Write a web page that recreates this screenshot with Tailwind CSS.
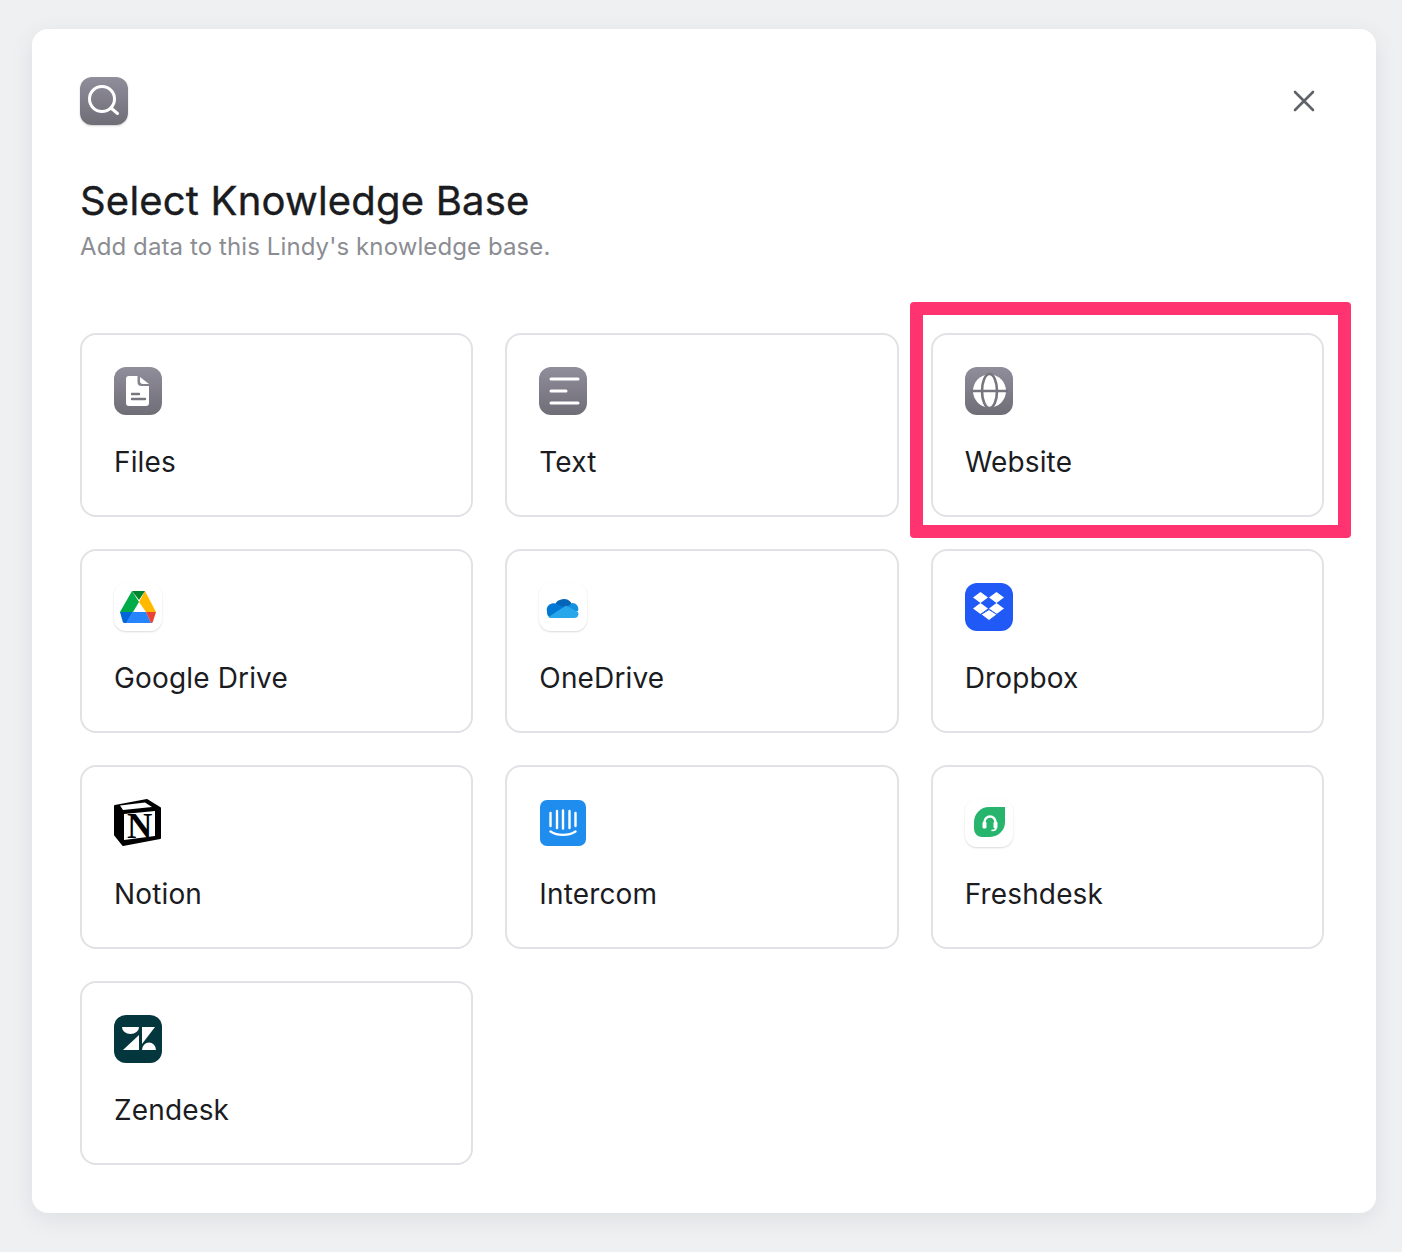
<!DOCTYPE html>
<html lang="en">

<head>
    <meta charset="UTF-8">
    <meta name="viewport" content="width=device-width, initial-scale=1.0">
    <title>Select Knowledge Base</title>
    <script src="https://cdn.jsdelivr.net/npm/@tailwindcss/browser@4"></script>
</head>

<body class="bg-[#eff0f2] h-[1252px] overflow-hidden font-['Inter',sans-serif]">
    <div class="pt-[29px] px-[32px]">
        <div class="relative bg-white rounded-[16px] w-[1344px] h-[1184px] p-[48px] shadow-[0_6px_24px_rgba(16,24,40,0.08)]">
            <div class="flex items-center justify-between h-[48px]">
                <div class="w-[48px] h-[48px] rounded-[12px] bg-gradient-to-b from-[#918e9c] to-[#6f6d76] shadow-[0_1px_2px_rgba(0,0,0,0.2)] flex items-center justify-center">
                    <svg class="w-[36px] h-[36px]" viewBox="0 0 36 36" fill="none" stroke="white" stroke-width="3" stroke-linecap="round">
                        <circle cx="16" cy="16" r="12.500"/>
                        <path d="M25 25L31.500 30.500"/>
                    </svg>
                </div>
                <button class="w-[48px] h-[48px] flex items-center justify-center">
                    <svg class="w-[24px] h-[24px]" viewBox="0 0 24 24" fill="none" stroke="#5f6368" stroke-width="2.600" stroke-linecap="round">
                        <path d="M3 3L21 21M21 3L3 21"/>
                    </svg>
                </button>
            </div>

            <h1 class="mt-[52px] text-[40px] leading-[48px] font-normal tracking-[0.2px] text-[#1b1c1f] [-webkit-text-stroke:0.4px_#1b1c1f]">Select Knowledge Base</h1>
            <p class="mt-[6px] text-[24px] leading-[32px] tracking-[0.1px] text-[#8b8d93]">Add data to this Lindy's knowledge base.</p>

            <div class="mt-[70px] w-[1244px] grid grid-cols-3 gap-[32px]">
                <div class="h-[184px] rounded-[16px] border-2 border-[#e1e2e5] p-[32px]">
                    <div class="w-[48px] h-[48px] rounded-[12px] bg-gradient-to-b from-[#918e9c] to-[#6f6d76] flex items-center justify-center">
                        <svg class="w-[48px] h-[48px]" viewBox="0 0 48 48">
                            <path fill="white" d="M15 9h8.500v6a4 4 0 0 0 4 4H35v17a3 3 0 0 1-3 3H15a3 3 0 0 1-3-3V12a3 3 0 0 1 3-3z"/>
                            <path fill="white" d="M26 10l9 7h-6a3 3 0 0 1-3-3z"/>
                            <path fill="none" stroke="#77757e" stroke-width="2.400" stroke-linecap="round" d="M18 27h7M18 32h13"/>
                        </svg>
                    </div>
                    <p class="mt-[29px] text-[28px] leading-[36px] tracking-[0.15px] text-[#1b1c1f]">Files</p>
                </div>

                <div class="h-[184px] rounded-[16px] border-2 border-[#e1e2e5] p-[32px]">
                    <div class="w-[48px] h-[48px] rounded-[12px] bg-gradient-to-b from-[#918e9c] to-[#6f6d76] flex items-center justify-center">
                        <svg class="w-[48px] h-[48px]" viewBox="0 0 48 48" fill="none" stroke="white" stroke-width="3" stroke-linecap="round">
                            <path d="M12 12h27M12 24h15M12 36h27"/>
                        </svg>
                    </div>
                    <p class="mt-[29px] text-[28px] leading-[36px] tracking-[0.15px] text-[#1b1c1f]">Text</p>
                </div>

                <div class="h-[184px] rounded-[16px] border-2 border-[#e1e2e5] p-[32px]">
                    <div class="w-[48px] h-[48px] rounded-[12px] bg-gradient-to-b from-[#918e9c] to-[#6f6d76] flex items-center justify-center">
                        <svg class="w-[48px] h-[48px]" viewBox="0 0 48 48">
                            <circle cx="24.500" cy="24" r="16.500" fill="white"/>
                            <ellipse cx="24.500" cy="24" rx="7.500" ry="17" fill="none" stroke="#77757e" stroke-width="2.600"/>
                            <path d="M6 24h37" stroke="#77757e" stroke-width="2.600"/>
                        </svg>
                    </div>
                    <p class="mt-[29px] text-[28px] leading-[36px] tracking-[0.15px] text-[#1b1c1f]">Website</p>
                </div>

                <div class="h-[184px] rounded-[16px] border-2 border-[#e1e2e5] p-[32px]">
                    <div class="w-[48px] h-[48px] rounded-[12px] bg-white shadow-[0_1px_2px_rgba(0,0,0,0.15)] flex items-center justify-center">
                        <svg class="w-[48px] h-[48px]" viewBox="0 0 48 48">
                            <polygon fill="#00ac47" points="18,8 25,19 19,29 6,29"/>
                            <polygon fill="#ffba00" points="31,8 42,29 32,29 25,19"/>
                            <polygon fill="#00832d" points="18,8 31,8 25,17"/>
                            <path fill="#0066da" d="M6 29h13l-6.500 11H10.500a2 2 0 0 1-1.700-1z"/>
                            <polygon fill="#2684fc" points="19,29 32,29 37,40 12,40"/>
                            <path fill="#ea4335" d="M32 29h10l-3 9.500a2 2 0 0 1-1.500 1.500H37z"/>
                        </svg>
                    </div>
                    <p class="mt-[29px] text-[28px] leading-[36px] tracking-[0.15px] text-[#1b1c1f]">Google Drive</p>
                </div>

                <div class="h-[184px] rounded-[16px] border-2 border-[#e1e2e5] p-[32px]">
                    <div class="w-[48px] h-[48px] rounded-[12px] bg-white shadow-[0_1px_2px_rgba(0,0,0,0.15)] flex items-center justify-center">
                        <svg class="w-[48px] h-[48px]" viewBox="0 0 48 48">
                            <path fill="#0364b8" d="M16 22a9 8 0 0 1 16-2.500l1 2.500-6 3-9-1z"/>
                            <path fill="#0078d4" d="M13 20.500c2-.5 4 0 6 1l8 3.500-12 10h-2.500A5.500 5.500 0 0 1 8 29a6.500 6.500 0 0 1 5-8.500z"/>
                            <path fill="#1490df" d="M33 20a6 6 0 0 1 6 8l-7 1-5-4z"/>
                            <path fill="#28a8ea" d="M27 22.500l12 6.500a4 4 0 0 1-4 6H12.500a5 5 0 0 1-3-1z"/>
                        </svg>
                    </div>
                    <p class="mt-[29px] text-[28px] leading-[36px] tracking-[0.15px] text-[#1b1c1f]">OneDrive</p>
                </div>

                <div class="h-[184px] rounded-[16px] border-2 border-[#e1e2e5] p-[32px]">
                    <div class="w-[48px] h-[48px] rounded-[12px] bg-[#2059f6] flex items-center justify-center">
                        <svg class="w-[48px] h-[48px]" viewBox="0 0 48 48" fill="white">
                            <polygon points="15.500,9 23,14.500 15.500,20 8,14.500"/>
                            <polygon points="31.500,9 39,14.500 31.500,20 24,14.500"/>
                            <polygon points="15.500,20 23,25.500 15.500,31 8,25.500"/>
                            <polygon points="31.500,20 39,25.500 31.500,31 24,25.500"/>
                            <polygon stroke="#2059f6" stroke-width="1" points="24,26.500 32,31.500 24,37.500 16,31.500"/>
                        </svg>
                    </div>
                    <p class="mt-[29px] text-[28px] leading-[36px] tracking-[0.15px] text-[#1b1c1f]">Dropbox</p>
                </div>

                <div class="h-[184px] rounded-[16px] border-2 border-[#e1e2e5] p-[32px]">
                    <div class="relative w-[48px] h-[48px] flex items-center justify-center">
                        <svg class="w-[48px] h-[48px]" viewBox="0 0 48 48">
                            <polygon fill="black" stroke="black" stroke-width="2" stroke-linejoin="round" points="1,7 33,1 46,9 46,39 9,46 1,36"/>
                            <polygon fill="white" points="10,15 41,12 41,37 10,41"/>
                            <polygon fill="white" points="6,6.500 31,3.500 38,8 9,11"/>
                        </svg>
                        <span class="absolute left-[13px] top-[10px] font-['Liberation_Serif',serif] font-bold text-[35px] leading-[36px] text-black">N</span>
                    </div>
                    <p class="mt-[29px] text-[28px] leading-[36px] tracking-[0.15px] text-[#1b1c1f]">Notion</p>
                </div>

                <div class="h-[184px] rounded-[16px] border-2 border-[#e1e2e5] p-[32px]">
                    <div class="w-[48px] h-[48px] flex items-center justify-center">
                        <svg class="w-[46px] h-[46px]" viewBox="0 0 46 46">
                            <rect width="46" height="46" rx="7" fill="#1f8ded"/>
                            <path fill="none" stroke="white" stroke-width="2.400" stroke-linecap="round" d="M10.500 13v13M17 11v17M23 10.500v18M29.500 11v17M35.500 13v13M10.500 31.500c7 4.500 18 4.500 25 0"/>
                        </svg>
                    </div>
                    <p class="mt-[29px] text-[28px] leading-[36px] tracking-[0.15px] text-[#1b1c1f]">Intercom</p>
                </div>

                <div class="h-[184px] rounded-[16px] border-2 border-[#e1e2e5] p-[32px]">
                    <div class="w-[48px] h-[48px] rounded-[12px] bg-white shadow-[0_1px_2px_rgba(0,0,0,0.15)] flex items-center justify-center">
                        <svg class="w-[48px] h-[48px]" viewBox="0 0 48 48">
                            <path fill="#27b56e" d="M24 8h16v15a15 15 0 0 1-15 15h-8a8 8 0 0 1-8-8v-7A15 15 0 0 1 24 8z"/>
                            <path fill="none" stroke="white" stroke-width="2.400" d="M19.500 25v-2a5.500 5.500 0 0 1 11 0v2"/>
                            <rect x="17.500" y="22.500" width="4" height="7" rx="1.500" fill="white"/>
                            <rect x="28.500" y="22.500" width="4" height="7" rx="1.500" fill="white"/>
                            <path fill="none" stroke="white" stroke-width="1.600" stroke-linecap="round" d="M31 29c0 2-2 2.500-4 2.500"/>
                        </svg>
                    </div>
                    <p class="mt-[29px] text-[28px] leading-[36px] tracking-[0.15px] text-[#1b1c1f]">Freshdesk</p>
                </div>

                <div class="h-[184px] rounded-[16px] border-2 border-[#e1e2e5] p-[32px]">
                    <div class="w-[48px] h-[48px] rounded-[12px] bg-[#03363d] flex items-center justify-center">
                        <svg class="w-[48px] h-[48px]" viewBox="0 0 48 48" fill="white">
                            <path d="M8 12h17a8.500 7 0 0 1-17 0z"/>
                            <polygon points="25,20 25,35 9,35"/>
                            <polygon points="28,12 41,12 28,29"/>
                            <path d="M28 35a7 7.500 0 0 1 14 0z"/>
                        </svg>
                    </div>
                    <p class="mt-[29px] text-[28px] leading-[36px] tracking-[0.15px] text-[#1b1c1f]">Zendesk</p>
                </div>
            </div>

            <!-- pink highlight over the Website card -->
            <div class="absolute left-[878px] top-[273px] w-[441px] h-[236px] border-[13px] border-[#ff3370] rounded-[4px]"></div>
        </div>
    </div>
</body>

</html>
